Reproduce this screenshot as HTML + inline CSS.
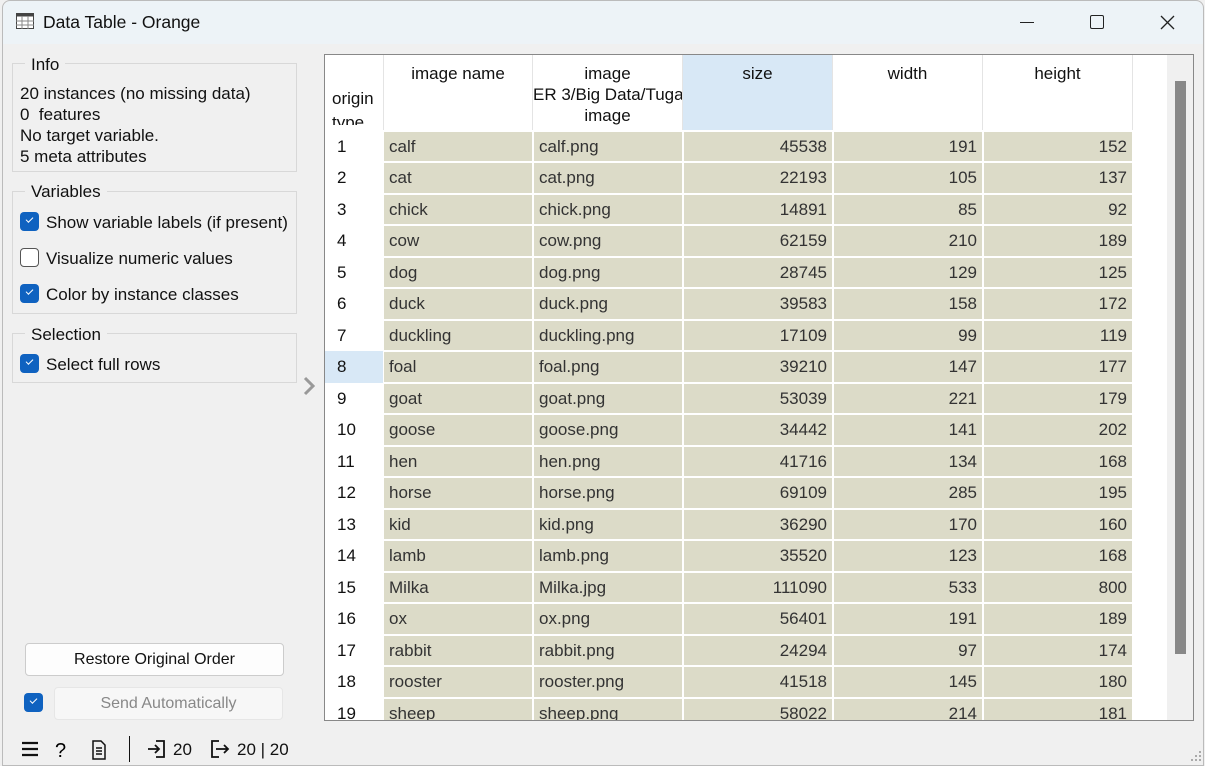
<!DOCTYPE html>
<html><head><meta charset="utf-8"><style>
*{box-sizing:border-box;margin:0;padding:0}
body{width:1205px;height:766px;overflow:hidden;background:#fff;font-family:"Liberation Sans",sans-serif;font-size:17px;color:#111;position:relative}
.win{position:absolute;left:0;top:0;width:1205px;height:766px;background:#f0f0f0;overflow:hidden}
.frame{position:absolute;left:2px;top:0;width:1202px;height:766px;border:1px solid #bbb;border-radius:8px 8px 0 0;pointer-events:none}
.title{position:absolute;left:3px;top:1px;right:2px;height:43px;background:#edf3f7;border-radius:8px 8px 0 0}
.abs{position:absolute;white-space:nowrap}
.grp{position:absolute;border:1px solid #d8d8d8}
.cb{position:absolute;width:19px;height:19px;border-radius:4px;background:#0f62c0}
.cb::after{content:"";position:absolute;left:6px;top:5px;width:6px;height:3px;border-left:1.3px solid #fff;border-bottom:1.3px solid #fff;transform:rotate(-45deg)}
.cb.off{background:#fff;border:1.5px solid #555}.cb.off::after{display:none}
.tbl{position:absolute;left:324px;top:54px;width:870px;height:667px;border:1px solid #888;background:#fff;overflow:hidden}
.c{position:absolute;height:29.5px;background:#dcdbc8;color:#333;line-height:30px;padding:0 5px;overflow:hidden;white-space:nowrap}
.r{text-align:right}
.rh{position:absolute;left:0;width:58px;height:31.5px;line-height:31px;padding-left:12px;color:#111}
.hd{position:absolute;top:0;height:75px;text-align:center;color:#111;line-height:21px;padding-top:8px;overflow:hidden;white-space:nowrap;border-right:1px solid #e4e4e4}
</style></head><body>
<div class="win">
<div class="title">
<svg class="abs" style="left:13px;top:12px" width="18" height="16" viewBox="0 0 18 16"><rect x=".5" y=".5" width="17" height="15" fill="#fff" stroke="#444"/><rect x=".5" y=".5" width="17" height="3" fill="#444"/><path d="M6 3v13M12 3v13M0 8h18M0 12h18" stroke="#888"/></svg>
<div class="abs" style="left:40px;top:11px;font-size:17.5px">Data Table - Orange</div>
<div class="abs" style="left:1017px;top:21px;width:14px;border-top:1px solid #222"></div>
<div class="abs" style="left:1087px;top:14px;width:14px;height:14px;border:1.5px solid #222;border-radius:2px"></div>
<svg class="abs" style="left:1157px;top:14px" width="15" height="15"><path d="M1 1L14 14M14 1L1 14" stroke="#222" stroke-width="1.3"/></svg>
</div>
<div class="grp" style="left:12px;top:63px;width:285px;height:109px"></div>
<div class="abs" style="left:25px;top:55px;background:#f0f0f0;padding:0 6px">Info</div>
<div class="abs" style="left:20px;top:83px;line-height:21px">20 instances (no missing data)<br>0&nbsp; features<br>No target variable.<br>5 meta attributes</div>
<div class="grp" style="left:12px;top:191px;width:285px;height:123px"></div>
<div class="abs" style="left:25px;top:182px;background:#f0f0f0;padding:0 6px">Variables</div>
<div class="cb" style="left:20px;top:212px"></div><div class="abs" style="left:46px;top:213px">Show variable labels (if present)</div>
<div class="cb off" style="left:20px;top:248px"></div><div class="abs" style="left:46px;top:249px">Visualize numeric values</div>
<div class="cb" style="left:20px;top:284px"></div><div class="abs" style="left:46px;top:285px">Color by instance classes</div>
<div class="grp" style="left:12px;top:333px;width:285px;height:50px"></div>
<div class="abs" style="left:25px;top:325px;background:#f0f0f0;padding:0 6px">Selection</div>
<div class="cb" style="left:20px;top:354px"></div><div class="abs" style="left:46px;top:355px">Select full rows</div>
<svg class="abs" style="left:302px;top:376px" width="14" height="20"><path d="M3 2l8 8-8 8" stroke="#999" stroke-width="3" fill="none"/></svg>
<div class="abs" style="left:25px;top:643px;width:259px;height:33px;background:#fdfdfd;border:1px solid #ccc;border-radius:4px;text-align:center;line-height:31px;font-size:16px">Restore Original Order</div>
<div class="cb" style="left:24px;top:693px"></div>
<div class="abs" style="left:54px;top:687px;width:229px;height:33px;background:#f7f7f7;border:1px solid #e6e6e6;border-radius:4px;text-align:center;line-height:31px;font-size:16px;color:#888">Send Automatically</div>
<svg class="abs" style="left:20px;top:740px" width="100" height="20"><path d="M2 3h16M2 9h16M2 15h16" stroke="#111" stroke-width="2.2"/><text x="35" y="17" font-family="Liberation Sans" font-size="20">?</text><path d="M73 1h8l4 4v14h-12z M76 8h6M76 11h6M76 14h6" stroke="#111" stroke-width="1.5" fill="none"/></svg>
<div class="abs" style="left:129px;top:736px;height:26px;border-left:1.5px solid #111"></div>
<svg class="abs" style="left:146px;top:739px" width="22" height="20"><path d="M10 2h8v16h-8M2 10h11M9 6l4 4-4 4" stroke="#111" stroke-width="1.8" fill="none"/></svg>
<div class="abs" style="left:173px;top:740px">20</div>
<svg class="abs" style="left:209px;top:739px" width="22" height="20"><path d="M10 2H3v16h7M7 10h12M15 6l4 4-4 4" stroke="#111" stroke-width="1.8" fill="none"/></svg>
<div class="abs" style="left:237px;top:740px">20 | 20</div>
<svg class="abs" style="left:1189px;top:751px" width="14" height="12" fill="#aaa"><rect x="10" y="0" width="2" height="2"/><rect x="6" y="4" width="2" height="2"/><rect x="10" y="4" width="2" height="2"/><rect x="2" y="8" width="2" height="2"/><rect x="6" y="8" width="2" height="2"/><rect x="10" y="8" width="2" height="2"/></svg>

<div class="tbl">
<div class="abs" style="left:7px;top:34px;color:#111">origin</div>
<div class="abs" style="left:7px;top:58px;height:12px;overflow:hidden;color:#111">type</div>
<div class="hd" style="left:58px;width:150px;border-left:1px solid #e4e4e4">image name</div>
<div class="hd" style="left:208px;width:150px">image<br>ER 3/Big Data/Tuga<br>image</div>
<div class="hd" style="left:358px;width:150px;background:#d8e8f6">size</div>
<div class="hd" style="left:508px;width:150px">width</div>
<div class="hd" style="left:658px;width:150px">height</div>
<div class="abs" style="left:842px;top:0;width:28px;height:667px;background:#f0f0f0"></div>
<div class="abs" style="left:850px;top:26px;width:11px;height:573px;background:#888"></div>
<div id="rows"></div>
</div>
</div>
<div class="frame"></div>
<script>
var d=[["calf","calf.png",45538,191,152],["cat","cat.png",22193,105,137],["chick","chick.png",14891,85,92],["cow","cow.png",62159,210,189],["dog","dog.png",28745,129,125],["duck","duck.png",39583,158,172],["duckling","duckling.png",17109,99,119],["foal","foal.png",39210,147,177],["goat","goat.png",53039,221,179],["goose","goose.png",34442,141,202],["hen","hen.png",41716,134,168],["horse","horse.png",69109,285,195],["kid","kid.png",36290,170,160],["lamb","lamb.png",35520,123,168],["Milka","Milka.jpg",111090,533,800],["ox","ox.png",56401,191,189],["rabbit","rabbit.png",24294,97,174],["rooster","rooster.png",41518,145,180],["sheep","sheep.png",58022,214,181]];
var h="";d.forEach(function(r,i){var t=75.5+i*31.5;
h+='<div class="rh" style="top:'+t+'px;'+(i==7?'background:#d8e8f6':'')+'">'+(i+1)+'</div>';
var L=[59,209,359,509,659];
for(var j=0;j<5;j++){h+='<div class="c'+(j>1?' r':'')+'" style="left:'+L[j]+'px;width:148px;top:'+(t+1)+'px">'+r[j]+'</div>';}
});document.getElementById("rows").innerHTML=h;
</script>
</body></html>
